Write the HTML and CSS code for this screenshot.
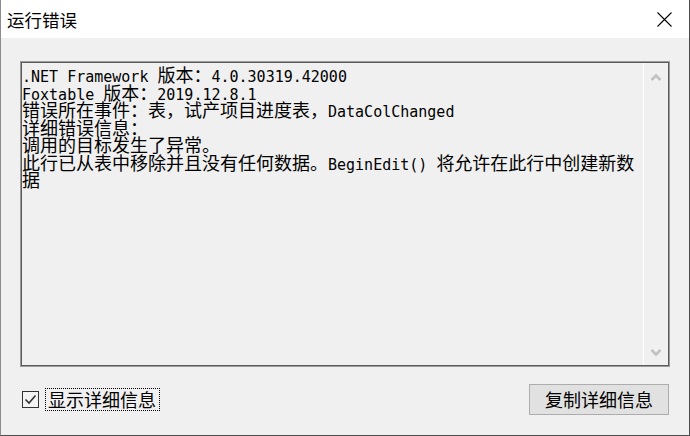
FILE: index.html
```html
<!DOCTYPE html>
<html lang="zh-CN">
<head>
<meta charset="utf-8">
<title>运行错误</title>
<link rel="stylesheet" href="styles.css">
</head>
<body>
<div class="window">
  <div class="titlebar">
    <span class="title">运行错误</span>
    <svg class="close" width="15" height="15" viewBox="0 0 15 15" aria-label="关闭">
      <path d="M0.5 0.5 L14.5 14.5 M14.5 0.5 L0.5 14.5" stroke="#000" stroke-width="1.1" fill="none"/>
    </svg>
  </div>
  <div class="content">
    <div class="textbox">
      <div class="text">
        <div class="ln"><span class="a">.NET Framework </span>版本：<span class="a">4.0.30319.42000</span></div>
        <div class="ln"><span class="a">Foxtable </span>版本：<span class="a">2019.12.8.1</span></div>
        <div class="ln">错误所在事件：表，试产项目进度表，<span class="a">DataColChanged</span></div>
        <div class="ln">详细错误信息：</div>
        <div class="ln">调用的目标发生了异常。</div>
        <div class="ln">此行已从表中移除并且没有任何数据。<span class="a">BeginEdit() </span>将允许在此行中创建新数</div>
        <div class="ln">据</div>
      </div>
      <div class="scrollbar">
        <svg width="12" height="8" viewBox="0 0 12 8"><polyline points="1.5,7 6,2.5 10.5,7" fill="none" stroke="#c1c1c1" stroke-width="2.6"/></svg>
        <svg width="12" height="8" viewBox="0 0 12 8"><polyline points="1.5,1 6,5.5 10.5,1" fill="none" stroke="#c1c1c1" stroke-width="2.6"/></svg>
      </div>
    </div>
    <div class="footer">
      <label class="check">
        <span class="box">
          <svg width="15" height="15" viewBox="0 0 15 15"><polyline points="2.5,7.5 6,11 12.5,3.5" fill="none" stroke="#333" stroke-width="1.6"/></svg>
        </span>
        <span class="label">显示详细信息</span>
      </label>
      <button class="btn">复制详细信息</button>
    </div>
  </div>
</div>
</body>
</html>
```

FILE: styles.css
```css
html, body {
  margin: 0;
  padding: 0;
}
body {
  width: 690px;
  height: 436px;
  overflow: hidden;
  background: #f0f0f0;
  font-family: "Noto Sans CJK SC", sans-serif;
}
.window {
  box-sizing: border-box;
  width: 690px;
  height: 436px;
  border-left: 1px solid #8c8c8c;
  border-right: 1px solid #4d4d4d;
  border-bottom: 1px solid #4d4d4d;
  background: #f0f0f0;
  display: flex;
  flex-direction: column;
}
.titlebar {
  height: 38px;
  background: #fff;
  display: flex;
  align-items: center;
  justify-content: space-between;
  padding: 0 17px 0 6px;
  flex: none;
}
.title {
  font-size: 17.5px;
  color: #000;
  line-height: 20px;
  margin-top: 1px;
}
.close {
  display: block;
  margin-top: 1px;
}
.content {
  padding: 23px 19px 0 19px;
}
.textbox {
  box-sizing: border-box;
  height: 306px;
  border: 1px solid #9a9a9a;
  box-shadow: inset 0 0 0 1px #5c5c5c;
  padding: 1px;
  display: flex;
}
.text {
  flex: 1;
  padding: 3px 0 0 0;
  font-family: "Noto Sans CJK SC", sans-serif;
  font-size: 18px;
  color: #000;
}
.ln {
  height: 17.5px;
  line-height: 17.5px;
  white-space: pre;
}
.a {
  font-family: "DejaVu Sans Mono", monospace;
  font-size: 15px;
}
.scrollbar {
  width: 24px;
  border-left: 1px solid #ffffff;
  display: flex;
  flex-direction: column;
  justify-content: space-between;
  align-items: center;
  padding: 10px 0 8px;
}
.scrollbar svg {
  display: block;
}
.footer {
  margin-top: 17px;
  height: 31px;
  display: flex;
  align-items: center;
  justify-content: space-between;
}
.check {
  display: flex;
  align-items: center;
  margin-left: 2px;
}
.box {
  box-sizing: border-box;
  width: 17px;
  height: 17px;
  border: 1px solid #333;
  background: #f4f4f4;
  display: flex;
  align-items: center;
  justify-content: center;
}
.box svg {
  display: block;
}
.label {
  margin-left: 6px;
  border: 1px dotted #000;
  padding: 0 3px 0 2px;
  height: 21px;
  line-height: 21px;
  font-size: 18px;
  color: #000;
}
.btn {
  box-sizing: border-box;
  width: 140px;
  height: 31px;
  margin-right: 1px;
  border: 1px solid #adadad;
  background: #e1e1e1;
  font-family: "Noto Sans CJK SC", sans-serif;
  font-size: 18px;
  color: #000;
  padding: 0;
  line-height: 29px;
}
```
